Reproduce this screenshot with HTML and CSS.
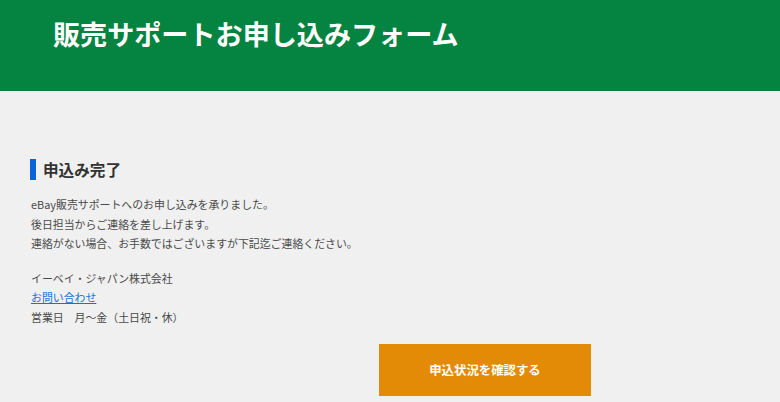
FILE: index.html
```html
<!DOCTYPE html>
<html lang="ja">
<head>
<meta charset="utf-8">
<title>販売サポートお申し込みフォーム</title>
<link rel="stylesheet" href="styles.css">
</head>
<body>
<header class="site-header">
  <h1 class="site-title">販売サポートお申し込みフォーム</h1>
</header>
<main class="content">
  <h2 class="section-title">申込み完了</h2>
  <p class="message">eBay販売サポートへのお申し込みを承りました。<br>後日担当からご連絡を差し上げます。<br>連絡がない場合、お手数ではございますが下記迄ご連絡ください。</p>
  <p class="company">イーベイ・ジャパン株式会社<br><a class="contact-link" href="#">お問い合わせ</a><br>営業日　月～金（土日祝・休）</p>
  <div class="actions">
    <a class="status-button" href="#">申込状況を確認する</a>
  </div>
</main>
</body>
</html>
```

FILE: styles.css
```css
html, body {
  margin: 0;
  padding: 0;
}
body {
  background: #f0f0f0;
  font-family: "Noto Sans CJK JP", "Noto Sans", sans-serif;
  color: #444;
}
.site-header {
  background: #058340;
  height: 91px;
  box-sizing: border-box;
  padding: 16px 0 0 53px;
}
.site-title {
  margin: 0;
  color: #fff;
  font-size: 27.1px;
  line-height: 36px;
  font-weight: 700;
  letter-spacing: 0;
}
.content {
  padding: 68px 0 0 30px;
}
.section-title {
  margin: 0;
  border-left: 6px solid #0a64d8;
  padding-left: 7px;
  font-size: 15.6px;
  line-height: 21px;
  font-weight: 700;
  color: #333;
}
.message,
.company {
  font-size: 10.9px;
  line-height: 19.6px;
  margin: 0;
  padding-left: 1px;
  color: #4a4a4a;
}
.message {
  margin-top: 15px;
}
.company {
  margin-top: 15px;
}
.contact-link {
  color: #1a6fd6;
  text-decoration: underline;
}
.actions {
  margin-top: 16px;
  padding-left: 349px;
}
.status-button {
  display: flex;
  align-items: center;
  justify-content: center;
  width: 212px;
  height: 52px;
  background: #e38b06;
  color: #fff;
  font-size: 12.4px;
  font-weight: 700;
  text-decoration: none;
}
```
